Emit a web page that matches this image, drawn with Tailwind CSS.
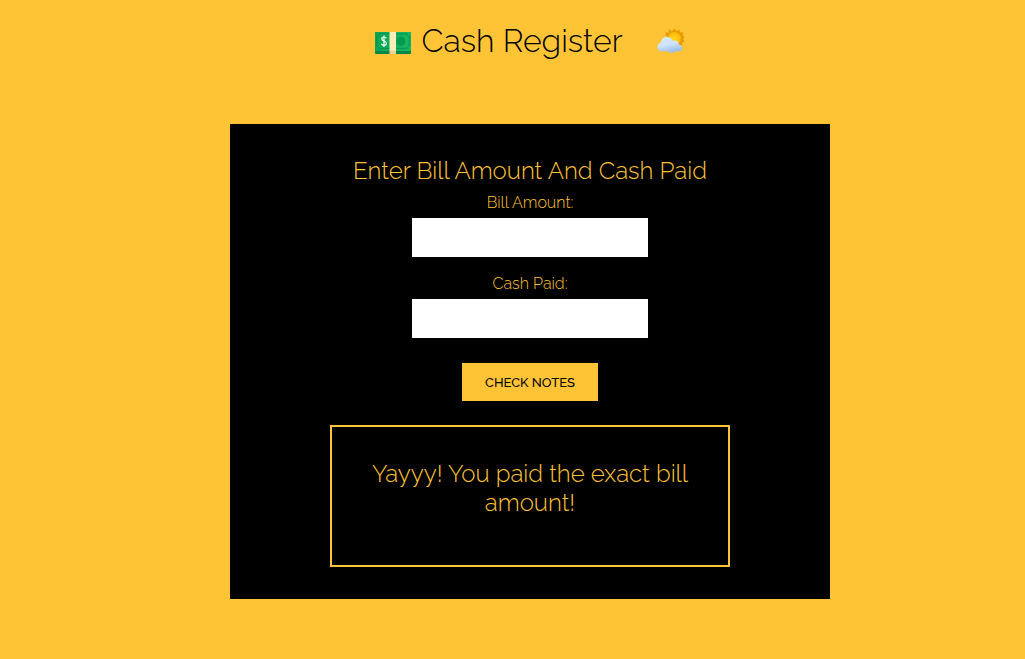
<!DOCTYPE html>
<html lang="en">
<head>
<meta charset="utf-8">
<meta name="viewport" content="width=device-width, initial-scale=1">
<title>Cash Register</title>
<script src="https://cdn.jsdelivr.net/npm/@tailwindcss/browser@4"></script>
</head>
<body class="min-h-screen bg-[#ffc436] pl-[35px] font-['Raleway','Lato',sans-serif] font-light text-black">
<header class="flex h-[124px] items-start justify-center pt-5">
  <h1 class="flex h-[42px] items-center text-[32px] leading-[42px]">
    <svg class="mt-1 mr-[10px] h-[22px] w-9" viewBox="0 0 36 22" aria-hidden="true">
      <defs><linearGradient id="note" x2="1"><stop stop-color="#07a653"/><stop offset="1" stop-color="#16b866"/></linearGradient></defs>
      <rect width="36" height="22" rx="1" fill="#07864a"/>
      <rect width="36" height="19" rx="1" fill="url(#note)"/>
      <path d="M4 1.800h28c0 1.400 1 2.300 2.400 2.500v9.600c-1.400.2-2.400 1.100-2.400 2.500H4c0-1.400-1-2.300-2.400-2.500V4.300C3 4.100 4 3.200 4 1.800z" fill="none" stroke="#078a4a" stroke-width=".7"/>
      <circle cx="25.800" cy="9.300" r="4.600" fill="#07994b"/>
      <path d="M11.300 6.300C10.800 5.300 9.900 5 9 5 7.700 5 6.800 5.800 6.800 6.900c0 2.700 4.600 1.500 4.600 4.400 0 1.300-1 2.100-2.400 2.100-1.200 0-2.200-.5-2.600-1.600M9 3.400v11.600" fill="none" stroke="#fff" stroke-width="1.200"/>
      <rect x="14.500" width="6.500" height="19" fill="#ffedb8"/>
      <rect x="14.500" y="19" width="6.500" height="3" fill="#f3d08c"/>
    </svg>
    Cash Register
    <svg class="ml-[34px] h-7 w-7" viewBox="0 0 28 28" aria-hidden="true">
      <defs>
        <linearGradient id="cloud" x2=".3" y2="1"><stop stop-color="#dcebff"/><stop offset=".55" stop-color="#cfe3fb"/><stop offset="1" stop-color="#9dbfe9"/></linearGradient>
        <radialGradient id="sun" cx=".4" cy=".6" r=".65"><stop stop-color="#ffdb1e"/><stop offset="1" stop-color="#fbb50b"/></radialGradient>
      </defs>
      <path d="M17.500 1.500l2 2.800 2.800-2 .6 3.300 3.400-.6-.6 3.400 2.200 1.900-2 1.800 1.900 2.500-2.700 1 .2 3.200-3.300-.5-2 2.600L9 8.500 8.500 5.200l3.200.5.100-3.600 3.200 2.200z" fill="#e79a08"/>
      <circle cx="17.500" cy="11.300" r="6.300" fill="url(#sun)"/>
      <path d="M5.500 24.500C2.300 24.500.4 22.600.4 20c0-2.300 1.500-4.100 3.600-4.500C4.300 12.200 6.600 10 9.800 10c2.800 0 5 1.500 5.900 3.900 3.500-1 6 .8 6.200 3.700 2 .3 3.400 1.500 3.400 3.300 0 2.100-1.500 3.500-3.800 3.500-1.100 0-2-.2-2.600-.6-1 1.400-2.600 2-4.400 2-1.900 0-3.500-.7-4.500-2-1.200.5-2.700.7-4.500.7z" fill="url(#cloud)"/>
    </svg>
  </h1>
</header>
<main class="mx-auto flex w-full max-w-[600px] flex-col items-center bg-black px-4 py-8 text-center text-[#ffc436]">
  <h2 class="text-[24px] leading-[29px]">Enter Bill Amount And Cash Paid</h2>
  <form class="flex flex-col items-center" onsubmit="return false">
    <label for="bill" class="mt-[7px] leading-[22px]">Bill Amount:</label>
    <input id="bill" type="number" class="mt-1 h-[39px] w-[236px] bg-white px-2 text-black">
    <label for="cash" class="mt-4 leading-[22px]">Cash Paid:</label>
    <input id="cash" type="number" class="mt-1 h-[39px] w-[236px] bg-white px-2 text-black">
    <button type="submit" class="mt-[25px] h-[38px] w-[136px] bg-[#ffc436] pt-px text-[13px] font-medium text-black">CHECK NOTES</button>
  </form>
  <output for="bill cash" class="mt-6 block min-h-[142px] w-full max-w-[400px] border-2 border-[#ffc436] px-8 py-8 text-[24px] leading-[29px]">Yayyy! You paid the exact bill amount!</output>
</main>
</body>
</html>
